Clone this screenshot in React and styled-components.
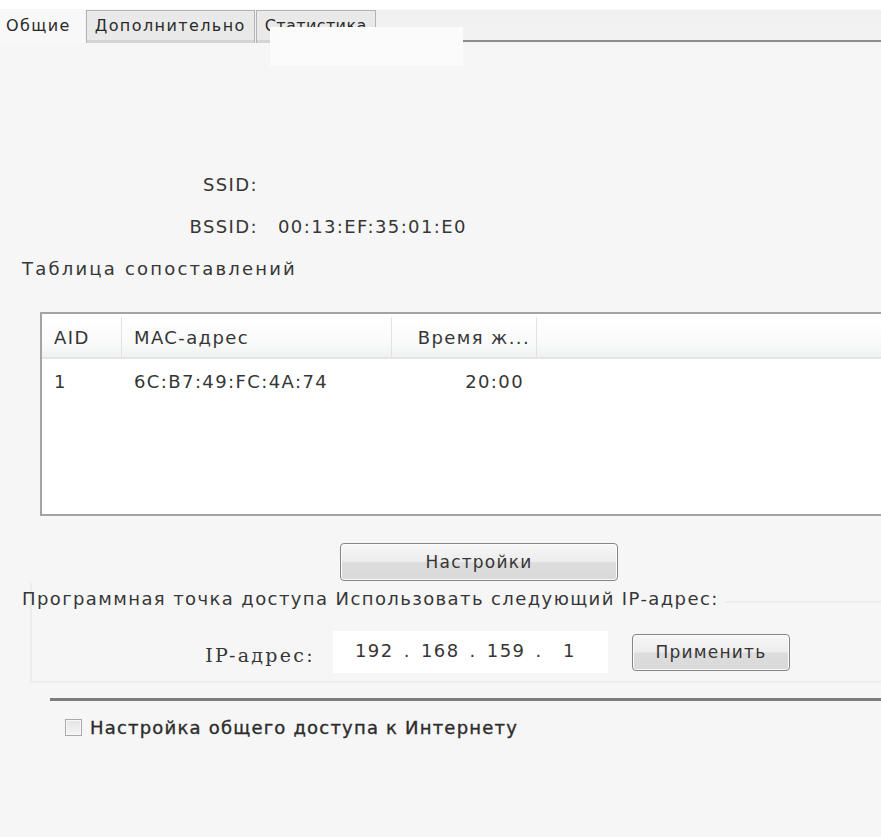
import React from "react";
import styled, { createGlobalStyle } from "styled-components";

const GlobalStyle = createGlobalStyle`
  html, body {
    margin: 0;
    padding: 0;
    background: #f6f6f6;
  }
  #root {
    width: 881px;
    height: 837px;
    overflow: hidden;
  }
`;

const uiFont = `"DejaVu Sans", "Noto Sans", sans-serif`;

const Window = styled.div`
  position: relative;
  width: 881px;
  height: 837px;
  background: #f6f6f6;
  font-family: ${uiFont};
  font-size: 18px;
  letter-spacing: 1.4px;
  color: #363636;
  display: flex;
  flex-direction: column;
`;

const TabStrip = styled.div`
  display: flex;
  align-items: flex-end;
  height: 43px;
  padding-top: 9px;
  box-sizing: border-box;
  background: linear-gradient(#ffffff 0, #ffffff 9px, #f0f0f0 10px, #f3f3f3 100%);
`;

const Tab = styled.div`
  height: 33px;
  box-sizing: border-box;
  padding: 0 ${(p) => (p.$active ? "14px 3px 6px" : "8px 3px 8px")};
  display: flex;
  align-items: center;
  font-size: 16px;
  letter-spacing: ${(p) => (p.$tight ? "0.4px" : "1.4px")};
  color: #2a2a2a;
  background: ${(p) => (p.$active ? "#f8f8f8" : "#e9e9e9")};
  border: ${(p) => (p.$active ? "none" : "1px solid #b4b4b4")};
  border-bottom: none;
  margin-right: 1px;
  box-shadow: ${(p) => (p.$active ? "none" : "inset 0 -3px 0 #d4d4d4")};
`;

const TabRest = styled.div`
  flex: 1;
  align-self: flex-end;
  border-bottom: 2px solid #8d8d8d;
  margin-bottom: 1px;
`;

// washed-out strip lying over the third tab
const Glare = styled.div`
  position: absolute;
  left: 270px;
  top: 27px;
  width: 193px;
  height: 39px;
  background: #fbfbfb;
`;

const Body = styled.div`
  display: flex;
  flex-direction: column;
  padding: 0 0 0 22px;
`;

const InfoGrid = styled.div`
  display: grid;
  grid-template-columns: 236px auto;
  column-gap: 20px;
  row-gap: 12px;
  margin-top: 127px;
`;

const InfoLabel = styled.div`
  text-align: right;
  line-height: 30px;
`;

const InfoValue = styled.div`
  line-height: 30px;
`;

const SectionTitle = styled.div`
  margin-top: 12px;
  line-height: 30px;
  letter-spacing: 2.2px;
`;

const ListView = styled.div`
  margin: 28px 0 0 18px;
  height: 204px;
  background: #fff;
  border: 2px solid #a3a3a3;
  border-right: none;
  box-sizing: border-box;
  overflow: hidden;
`;

const HeaderRow = styled.div`
  display: flex;
  height: 40px;
  margin-top: 3px;
  background: linear-gradient(#ffffff 0%, #fbfbfb 55%, #f0f2f2 100%);
  border-bottom: 2px solid #e4e4e4;
`;

const HeaderCell = styled.div`
  flex: 0 0 ${(p) => p.$w}px;
  box-sizing: border-box;
  padding: 0 ${(p) => (p.$right ? "6px" : "12px")};
  display: flex;
  align-items: center;
  justify-content: ${(p) => (p.$right ? "flex-end" : "flex-start")};
  border-right: ${(p) => (p.$last ? "none" : "1px solid #e2e2e2")};
  white-space: nowrap;
`;

const DataRow = styled.div`
  display: flex;
  height: 44px;
`;

const DataCell = styled.div`
  flex: 0 0 ${(p) => p.$w}px;
  box-sizing: border-box;
  padding: 0 ${(p) => (p.$right ? "13px" : "12px")};
  display: flex;
  align-items: center;
  justify-content: ${(p) => (p.$right ? "flex-end" : "flex-start")};
  white-space: nowrap;
`;

const ButtonRow = styled.div`
  display: flex;
  padding-left: 318px;
  margin-top: 27px;
`;

const PushButton = styled.button`
  width: ${(p) => p.$w}px;
  height: ${(p) => p.$h || 38}px;
  border: 1px solid #858585;
  border-radius: 4px;
  background: linear-gradient(#f7f7f7 0%, #ededed 48%, #dddddd 52%, #d9d9d9 100%);
  box-shadow: inset 0 0 0 1px #fcfcfc;
  font-family: ${uiFont};
  font-size: 17px;
  letter-spacing: 1.2px;
  color: #363636;
  padding: 0;
`;

const GroupBox = styled.div`
  margin: 2px 0 0 8px;
  border-left: 2px solid #ececec;
  border-bottom: 2px solid #ececec;
  padding-bottom: 8px;
`;

const GroupHead = styled.div`
  display: flex;
  align-items: center;
  margin-left: -10px;
  height: 30px;
`;

const GroupTitle = styled.div`
  white-space: nowrap;
  padding-right: 6px;
`;

const GroupLine = styled.div`
  flex: 1;
  height: 2px;
  margin-top: 8px;
  background: #ececec;
`;

const IpRow = styled.div`
  display: flex;
  align-items: center;
  margin-top: 18px;
`;

const IpLabel = styled.div`
  width: 283px;
  text-align: right;
  font-family: "DejaVu Serif", "Liberation Serif", serif;
  font-size: 19px;
  letter-spacing: 2.3px;
  margin: 6px 18px 0 0;
`;

const IpField = styled.div`
  width: 275px;
  height: 42px;
  background: #fff;
  display: flex;
  align-items: center;
  padding: 0 0 3px 22px;
  box-sizing: border-box;
  letter-spacing: 1.4px;
  word-spacing: 3px;
  white-space: pre;
  margin-right: 24px;
`;

const Divider = styled.div`
  margin: 15px 0 0 28px;
  height: 3px;
  background: #7d7d7d;
`;

const CheckRow = styled.label`
  display: flex;
  align-items: center;
  gap: 8px;
  margin: 16px 0 0 43px;
  color: #2c2c2c;
  letter-spacing: 1.2px;
  -webkit-text-stroke: 0.35px #2c2c2c;
`;

const CheckBox = styled.span`
  flex: 0 0 15px;
  height: 15px;
  border: 1px solid #a9a9a9;
  background: linear-gradient(#e4e4e4, #f4f4f4);
  box-shadow: inset 0 0 0 1px #f8f8f8;
`;

const columns = [
  { key: "aid", title: "AID", w: 80 },
  { key: "mac", title: "MAC-адрес", w: 270 },
  { key: "ttl", title: "Время ж...", w: 145, right: true },
];

const clients = [{ aid: "1", mac: "6C:B7:49:FC:4A:74", ttl: "20:00" }];

export default function App() {
  return (
    <>
      <GlobalStyle />
      <Window>
        <TabStrip>
          <Tab $active>Общие</Tab>
          <Tab>Дополнительно</Tab>
          <Tab $tight>Статистика</Tab>
          <TabRest />
        </TabStrip>
        <Glare />

        <Body>
          <InfoGrid>
            <InfoLabel>SSID:</InfoLabel>
            <InfoValue />
            <InfoLabel>BSSID:</InfoLabel>
            <InfoValue>00:13:EF:35:01:E0</InfoValue>
          </InfoGrid>

          <SectionTitle>Таблица сопоставлений</SectionTitle>

          <ListView>
            <HeaderRow>
              {columns.map((c) => (
                <HeaderCell key={c.key} $w={c.w} $right={c.right}>
                  {c.title}
                </HeaderCell>
              ))}
              <HeaderCell $w={400} $last />
            </HeaderRow>
            {clients.map((row) => (
              <DataRow key={row.aid}>
                {columns.map((c) => (
                  <DataCell key={c.key} $w={c.w} $right={c.right}>
                    {row[c.key]}
                  </DataCell>
                ))}
              </DataRow>
            ))}
          </ListView>

          <ButtonRow>
            <PushButton $w={278}>Настройки</PushButton>
          </ButtonRow>

          <GroupBox>
            <GroupHead>
              <GroupTitle>
                Программная точка доступа Использовать следующий IP-адрес:
              </GroupTitle>
              <GroupLine />
            </GroupHead>
            <IpRow>
              <IpLabel>IP-адрес:</IpLabel>
              <IpField>{"192 . 168 . 159 .  1"}</IpField>
              <PushButton $w={158} $h={37}>
                Применить
              </PushButton>
            </IpRow>
          </GroupBox>

          <Divider />

          <CheckRow>
            <CheckBox />
            Настройка общего доступа к Интернету
          </CheckRow>
        </Body>
      </Window>
    </>
  );
}
